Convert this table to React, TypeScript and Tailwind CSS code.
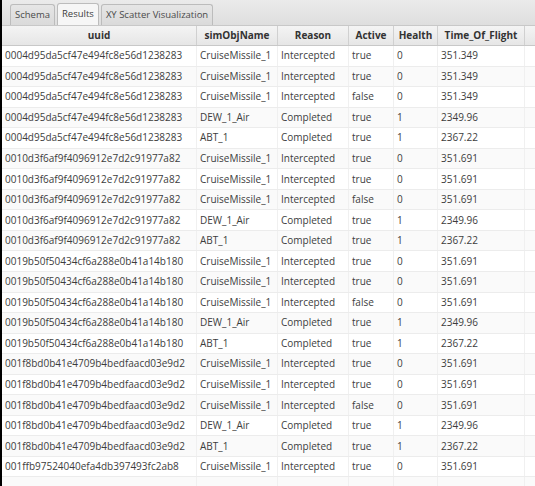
import React from 'react';

type Row = [string, string, string, string, string, string];

const ids = [
  '0004d95da5cf47e494fc8e56d1238283',
  '0010d3f6af9f4096912e7d2c91977a82',
  '0019b50f50434cf6a288e0b41a14b180',
  '001f8bd0b41e4709b4bedfaacd03e9d2',
];

function group(id: string, tof: string): Row[] {
  return [
    [id, 'CruiseMissile_1', 'Intercepted', 'true', '0', tof],
    [id, 'CruiseMissile_1', 'Intercepted', 'true', '0', tof],
    [id, 'CruiseMissile_1', 'Intercepted', 'false', '0', tof],
    [id, 'DEW_1_Air', 'Completed', 'true', '1', '2349.96'],
    [id, 'ABT_1', 'Completed', 'true', '1', '2367.22'],
  ];
}

const rows: Row[] = [
  ...group(ids[0], '351.349'),
  ...group(ids[1], '351.691'),
  ...group(ids[2], '351.691'),
  ...group(ids[3], '351.691'),
  ['001ffb97524040efa4db397493fc2ab8', 'CruiseMissile_1', 'Intercepted', 'true', '0', '351.691'],
  ['', '', '', '', '', ''],
];

const cols = [
  { name: 'uuid', w: 'w-[195px]' },
  { name: 'simObjName', w: 'w-[81px]' },
  { name: 'Reason', w: 'w-[71px]' },
  { name: 'Active', w: 'w-[45px]' },
  { name: 'Health', w: 'w-[44px]' },
  { name: 'Time_Of_Flight', w: 'w-[87px]' },
];

export default function App() {
  return (
    <div className="flex h-[486px] w-[535px] overflow-hidden bg-white text-[#3d3d3d] [font-family:'Open_Sans',sans-serif] text-[10px]">
      <div className="w-[2px] shrink-0 bg-black" />
      <div className="flex min-w-0 flex-1 flex-col">
        <div className="flex h-[26px] shrink-0 items-end gap-[2px] bg-gradient-to-b from-[#ebebeb] to-[#dedede] pl-[8px] border-b border-[#c8c8c8] text-[9.5px]">
          <div className="flex h-[21px] items-center rounded-t-[3px] border border-b-0 border-[#bcbcbc] bg-gradient-to-b from-[#e6e6e6] to-[#dadada] px-[4px] text-[#4a4a4a]">Schema</div>
          <div className="flex h-[22px] items-center rounded-t-[3px] border border-b-0 border-[#bcbcbc] bg-[#f6f6f6] px-[4px] text-[#3d3d3d]">Results</div>
          <div className="flex h-[21px] items-center rounded-t-[3px] border border-b-0 border-[#bcbcbc] bg-gradient-to-b from-[#e6e6e6] to-[#dadada] px-[4px] text-[#4a4a4a]">XY Scatter Visualization</div>
        </div>
        <div className="flex h-[20px] shrink-0 border-b border-[#c8c8c8] bg-gradient-to-b from-[#f4f4f4] to-[#e6e6e6] font-bold text-[#333]">
          {cols.map((c) => (
            <div key={c.name} className={`${c.w} flex shrink-0 items-center justify-center border-r border-[#d0d0d0]`}>{c.name}</div>
          ))}
          <div className="flex-1" />
        </div>
        {rows.map((r, i) => (
          <div key={i} className={`flex h-[20.55px] shrink-0 border-b border-[#ececec] ${i % 2 ? 'bg-[#fafafa]' : 'bg-white'}`}>
            {r.map((v, j) => (
              <div key={j} className={`${cols[j].w} flex shrink-0 items-center overflow-hidden whitespace-nowrap border-r border-[#f0f0f0] px-[3px]`}>{v}</div>
            ))}
            <div className="flex-1" />
          </div>
        ))}
      </div>
    </div>
  );
}
